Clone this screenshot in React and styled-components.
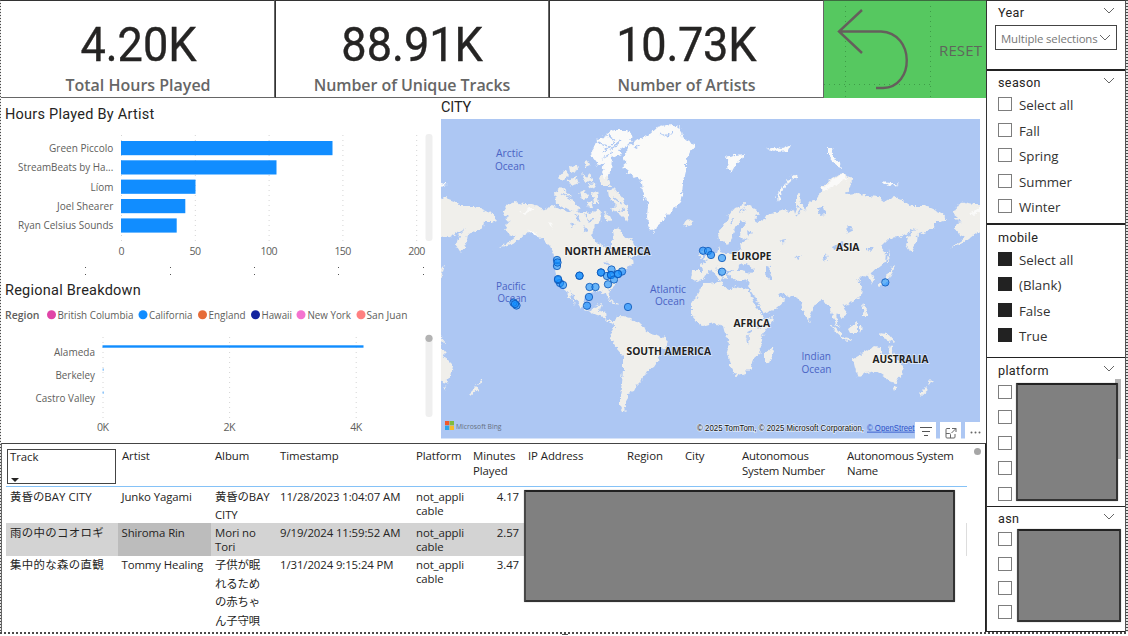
import React from "react";
import styled, { createGlobalStyle } from "styled-components";

const GlobalStyle = createGlobalStyle`
  *, *::before, *::after { box-sizing: border-box; }
  html, body { margin: 0; padding: 0; background: #fff; overflow: hidden; }
`;

const UI = `"Open Sans", "Noto Sans", "Noto Sans CJK JP", sans-serif`;
const DIN = `Roboto, "Open Sans", sans-serif`;

const Page = styled.div`
  width: 1128px;
  height: 636px;
  display: grid;
  grid-template-columns: 1px 985px 140px 2px;
  grid-template-rows: 632px 2px 2px;
  background: #fff;
  color: #252423;
  font-family: ${UI};
  overflow: hidden;
`;

const DashEdge = styled.div`
  background: ${(p) =>
    p.$flat
      ? "repeating-linear-gradient(90deg, #4a4a4a 0 2px, #fff 2px 4px)"
      : "repeating-linear-gradient(180deg, #4a4a4a 0 1px, #e4e4e4 1px 3px)"};
  ${(p) => p.$flat && "grid-column: 1 / -1;"}
`;

const Handle = styled.div`
  grid-column: 1 / -1;
  width: 6px;
  height: 1px;
  margin-left: 562px;
  background: #555;
`;

const Main = styled.main`
  display: flex;
  flex-direction: column;
`;

const KpiRow = styled.div`
  display: grid;
  grid-template-columns: 274px 274px 275px 162px;
  height: 98px;
`;

const KpiCard = styled.section`
  display: flex;
  flex-direction: column;
  align-items: center;
  border: 1px solid #333;
  border-left-width: ${(p) => (p.$first ? 0 : 1)}px;
  border-bottom-color: #666;
  border-right-color: #666;
  padding: 19px 0 0 ${(p) => (p.$first ? 1 : 0)}px;
`;

const KpiValue = styled.div`
  font: 400 48.5px/50px ${DIN};
  letter-spacing: ${(p) => p.$track || 0}px;
  transform: scaleX(0.93);
  -webkit-text-stroke: 0.4px #252423;
  white-space: nowrap;
`;

const KpiLabel = styled.div`
  margin-top: 4px;
  font: 600 16px/22px ${UI};
  letter-spacing: ${(p) => p.$track || 0}px;
  color: #666;
  white-space: nowrap;
`;

const ResetButton = styled.div`
  display: flex;
  align-items: center;
  justify-content: space-between;
  background: #56c860;
  border-top: 1px solid #3c6b3f;
  padding-right: 4px;
  font: 400 15px/20px ${UI};
  color: #5f665c;
`;

const ResetText = styled.span`
  letter-spacing: 0.1px;
  padding-top: 1px;
`;

const Middle = styled.div`
  display: grid;
  grid-template-columns: 440px 545px;
  height: 345px;
`;

const Charts = styled.div`
  display: flex;
  flex-direction: column;
`;

const Title = styled.h2`
  margin: 0;
  padding: ${(p) => p.$pad || "7px 0 0 4px"};
  height: ${(p) => p.$h || 26}px;
  font: 400 14.5px/20px ${DIN};
  letter-spacing: ${(p) => p.$track ?? 0.25}px;
  white-space: nowrap;
`;

const ChartSvg = styled.svg`
  display: block;
  font-family: ${UI};
  font-size: 10.6px;
  fill: #605e5c;
`;

const MapPanel = styled.section`
  display: flex;
  flex-direction: column;
`;

const MapFrame = styled.div`
  position: relative;
  width: 545px;
  height: 320px;
`;

const MapSvg = styled.svg`
  display: block;
`;

const MapTools = styled.div`
  position: absolute;
  right: 0;
  bottom: 0;
  display: flex;
  gap: 4px;
`;

const ToolButton = styled.div`
  width: ${(p) => p.$w || 21}px;
  height: 17px;
  padding-top: ${(p) => p.$drop || 0}px;
  background: #fff;
  display: flex;
  align-items: center;
  justify-content: center;
`;

const COLS = "112px 93px 65px 136px 57px 55px 99px 58px 57px 105px 124px";

const TablePanel = styled.section`
  position: relative;
  height: 189px;
  border-top: 1px solid #444;
  border-right: 1px solid #222;
  border-left: 1px solid #666;
  padding: 4px 0 0 4px;
  font: 400 11.4px/14.7px ${UI};
`;

const HeadRow = styled.div`
  display: grid;
  grid-template-columns: ${COLS};
  width: 961px;
  height: 39px;
  margin-bottom: 1px;
  border-bottom: 1.5px solid #85c2f7;
`;

const HeadCell = styled.div`
  padding: 1px 0 0 4px;
  letter-spacing: ${(p) => p.$track ?? -0.08}px;
  white-space: pre-line;
  ${(p) =>
    p.$focus &&
    `
    width: 109px;
    height: 35px;
    margin-left: 1px;
    padding: 0 0 0 2px;
    border: 1.5px solid #444;
    margin-top: 1px;
    line-height: 13px;
  `}
`;

const SortMark = styled.span`
  display: block;
  width: 0;
  margin: 15px 0 0 1px;
  border: 4px solid transparent;
  border-top-color: #252423;
  border-bottom: 0;
`;

const Row = styled.div`
  display: grid;
  grid-template-columns: ${COLS};
  width: 961px;
  height: ${(p) => p.$h}px;
  background: ${(p) =>
    p.$active ? "linear-gradient(90deg, #d3d3d3 949px, #fff 949px 960px, #ddd 960px)" : "#fff"};
`;

const Cell = styled.div`
  padding: ${(p) => p.$top ?? 1.5}px ${(p) => (p.$num ? 5 : 0)}px 0 ${(p) => (p.$inset ?? 4)}px;
  letter-spacing: ${(p) => p.$track ?? -0.1}px;
  text-align: ${(p) => (p.$num ? "right" : "left")};
  white-space: pre;
  line-height: ${(p) => p.$lh || 14.7}px;
  background: ${(p) => (p.$picked ? "#bcbcbc" : "none")};
`;

const ScrollDot = styled.span`
  position: absolute;
  right: 4px;
  top: 4px;
  width: 7px;
  height: 7px;
  border-radius: 50%;
  background: #a6a6a6;
`;

const Redaction = styled.div`
  position: absolute;
  left: ${(p) => p.$x}px;
  top: ${(p) => p.$y}px;
  width: ${(p) => p.$w}px;
  height: ${(p) => p.$h}px;
  background: #808080;
  border: 2px solid #333;
  border-top-color: #222;
  border-left-color: #484848;
  border-radius: 1px;
  box-shadow: 0 0 1px 0 #555;
`;

const Sidebar = styled.aside`
  display: flex;
  flex-direction: column;
  border-left: 1px solid #333;
  border-right: 1px solid #555;
  border-top: 1px solid #333;
`;

const Slicer = styled.section`
  position: relative;
  height: ${(p) => p.$h}px;
  padding: 0 10px 0 11px;
  border-bottom: ${(p) => p.$line || 1}px solid #222;
`;

const SlicerHead = styled.header`
  display: flex;
  justify-content: space-between;
  align-items: flex-start;
  height: ${(p) => p.$h || 26}px;
  padding-top: ${(p) => p.$top ?? 4}px;
  font: 400 12.6px/16px ${DIN};
  letter-spacing: 0.35px;
`;

const Select = styled.div`
  display: flex;
  justify-content: space-between;
  align-items: center;
  width: 122px;
  height: 25px;
  margin-left: -3px;
  padding: 2px 5px 0 5px;
  border: 1px solid #444;
  font: 400 11.4px/16px ${UI};
  letter-spacing: -0.13px;
  color: #777;
  white-space: nowrap;
`;

const Option = styled.label`
  display: flex;
  align-items: center;
  height: ${(p) => p.$h || 25.5}px;
  gap: 7px;
  font: 400 13.3px/18px ${UI};
  letter-spacing: 0;
  color: #333;
`;

const OptionText = styled.span`
  padding-bottom: 1.5px;
`;

const Box = styled.span`
  width: 14px;
  height: 14px;
  margin-top: -3px;
  border: 1px solid ${(p) => (p.$on ? "#222" : "#7d7d7d")};
  background: ${(p) => (p.$on ? "#222" : "#fff")};
`;

const ScrollThumb = styled.span`
  position: absolute;
  right: 4px;
  top: 21px;
  width: 6px;
  height: 80px;
  background: #b5b5b5;
`;

const Chevron = ({ top = 2 }) => (
  <svg width="12" height="8" viewBox="0 0 12 8" style={{ marginTop: top, flex: "none" }}>
    <path d="M1 1 L6 6 L11 1" fill="none" stroke="#666" strokeWidth="1" />
  </svg>
);

const ARTISTS = [
  ["Green Piccolo", 49, 141, 332.5],
  ["StreamBeats by Ha...", 18, 160.3, 276.5],
  ["Líom", 90.5, 179.6, 195.5],
  ["Joel Shearer", 57, 199, 185.3],
  ["Ryan Celsius Sounds", 18, 218.4, 176.7],
];

const ArtistChart = () => (
  <ChartSvg width="440" height="155" viewBox="1 124 440 155">
    {[0, 50, 100, 150, 200].map((v, i) => {
      const x = 121.5 + i * 73.8;
      return (
        <g key={v}>
          <line x1={x} x2={x} y1="135" y2="241" stroke="#d4d4d4" strokeDasharray="1 4" />
          <text x={x} y="254.5" textAnchor="middle" textLength={v === 0 ? 6 : v < 100 ? 11.5 : 17}>{v}</text>
        </g>
      );
    })}
    {ARTISTS.map(([name, x, y, end]) => (
      <g key={name}>
        <rect x="121" y={y} width={end - 121} height="14.2" fill="#118dff" />
        <text x={x} y={y + 11} textLength={113.3 - x} lengthAdjust="spacingAndGlyphs">{name}</text>
      </g>
    ))}
    <rect x="425.5" y="134" width="7" height="107" rx="3" fill="#efefef" />
    {[85, 170, 254, 338, 423].map((x) => (
      <g key={x} fill="#555">
        <rect x={x} y="267" width="1" height="1" />
        <rect x={x} y="274" width="1" height="1" />
      </g>
    ))}
  </ChartSvg>
);

const LEGEND = [
  ["British Columbia", "#e044a7", 51.5, 57.5, 133.5],
  ["California", "#118dff", 143, 149, 192.5],
  ["England", "#e66c37", 202.5, 208.5, 245.5],
  ["Hawaii", "#12239e", 255.5, 261.5, 292],
  ["New York", "#f472d0", 301, 307.5, 351],
  ["San Juan", "#ff8080", 361, 366.5, 407.5],
];

const RegionChart = () => (
  <ChartSvg width="440" height="142" viewBox="1 301 440 142">
    <text x="5" y="318.5" textLength="34.5" lengthAdjust="spacingAndGlyphs" fontWeight="600">Region</text>
    {LEGEND.map(([name, color, cx, x, end]) => (
      <g key={name}>
        <circle cx={cx} cy="314.8" r="4.5" fill={color} />
        <text x={x} y="318.5" textLength={end - x} lengthAdjust="spacingAndGlyphs">{name}</text>
      </g>
    ))}
    {["0K", "2K", "4K"].map((v, i) => (
      <g key={v}>
        <line x1={103 + i * 126.6} x2={103 + i * 126.6} y1="337" y2="418" stroke="#d4d4d4" strokeDasharray="1 4" />
        <text x={103 + i * 126.6} y="431" textAnchor="middle" textLength="12">{v}</text>
      </g>
    ))}
    {[["Alameda", 54, 356.2], ["Berkeley", 55.5, 379.2], ["Castro Valley", 35.5, 402.3]].map(([n, x, y]) => (
      <text key={n} x={x} y={y} textLength={95 - x} lengthAdjust="spacingAndGlyphs">{n}</text>
    ))}
    <rect x="102.5" y="345.3" width="261" height="2.4" fill="#118dff" />
    <rect x="102.5" y="368.5" width="1.5" height="2.2" fill="#8fc7fb" />
    <rect x="102.5" y="391.5" width="1.5" height="2.2" fill="#8fc7fb" />
    <rect x="425.5" y="336" width="7" height="81" rx="3" fill="#efefef" />
    <circle cx="429" cy="338.3" r="3.6" fill="#b3b3b3" />
  </ChartSvg>
);

const Land = () => (
  <g id="land">
    <g fill="#f0efeb" stroke="none">
      <path d="M503 213L508 205L514 202L524 204L532 204L541 207L543 211L548 208L553 206L562 210L568 212L575 209L580 214L586 211L591 214L598 209L602 214L601 221L596 224L593 229L592 238L597 242L604 246L608 251L611 248L611 242L614 238L613 231L617 229L622 234L626 239L631 238L634 246L640 251L637 256L629 258L634 262L628 268L622 272L618 277L617 283L612 288L608 291L610 298L607 299L604 292L597 291L590 293L585 296L583 304L586 310L592 311L595 306L601 304L599 311L606 313L607 319L613 322L618 321L617 324L610 323L604 317L596 315L587 311L581 307L576 299L570 291L572 299L576 305L570 299L566 290L560 286L556 277L555 269L557 261L553 253L550 246L544 240L537 235L528 232L525 234L520 238L513 243L499 248L511 241L516 237L509 234L505 229L507 223L512 222L504 219L508 217Z" />
      <path d="M613 321L617 317L622 316L631 318L636 322L643 325L646 332L657 335L667 339L666 345L660 351L658 361L654 367L647 371L642 380L637 385L634 391L628 393L628 398L625 403L624 408L628 412L623 411L620 405L620 395L622 383L623 369L623 356L617 349L613 342L610 336L612 331L614 327Z" />
      <path d="M718 233L724 226L729 215L736 207L744 204L750 206L757 210L760 214L754 216L758 222L764 220L767 215L776 213L784 210L792 211L796 205L796 195L800 193L801 204L806 211L808 204L813 201L820 196L822 186L829 181L838 175L845 174L852 179L851 188L846 194L858 193L868 196L878 197L885 202L893 197L904 201L911 206L923 206L931 208L940 212L947 220L941 222L934 222L933 228L924 232L918 234L917 242L911 253L906 245L909 235L916 228L909 232L900 237L889 238L881 246L886 252L885 263L877 269L871 272L874 281L871 284L868 276L863 275L858 280L862 287L861 295L855 301L848 304L842 306L848 314L842 319L837 313L836 320L841 328L838 327L833 318L830 309L825 302L820 299L814 307L810 315L808 320L804 314L801 302L797 298L785 295L779 293L785 301L776 309L764 314L758 303L752 292L748 286L749 279L739 281L732 278L729 274L732 270L726 269L728 280L724 279L720 272L715 267L722 277L720 281L712 270L707 273L702 280L697 282L692 279L693 271L702 271L701 265L708 261L713 256L717 253L719 247L721 252L727 254L736 253L741 249L740 243L748 240L740 237L741 229L746 223L741 219L735 227L732 238L728 246L723 241L719 241Z" />
      <path d="M703 284L710 284L722 281L723 286L730 290L736 286L748 289L754 301L759 312L765 319L773 317L771 324L763 335L760 342L761 352L753 359L751 368L745 374L736 377L731 368L727 354L730 345L725 334L723 326L714 323L703 326L697 322L691 315L691 305L696 297Z" />
      <path d="M773 347L774 351L769 363L765 362L765 354Z" />
      <path d="M853 359L860 355L867 351L873 346L881 347L881 353L888 356L890 345L894 352L896 359L903 366L901 376L896 383L888 381L884 376L876 371L867 373L857 377L855 368Z" />
      <path d="M892 386L897 387L894 391Z M919 394L927 386L929 389L921 396Z M928 385L930 379L933 382Z" />
      <path d="M879 333L888 334L896 343L889 340L883 338Z M848 329L857 322L857 333L850 333Z M830 324L843 334L841 337L834 331Z M843 337L853 339L852 341L843 339Z M859 326L863 325L861 334Z M862 303L865 305L868 316L864 316Z" />
      <path d="M878 284L885 279L889 273L892 266L895 264L892 274L888 282L880 286Z M888 250L890 262L887 262Z" />
      <path d="M703 260L705 256L702 251L706 247L709 255L712 259L704 262Z M697 256L701 252L701 258Z" />
      <path d="M683 223L688 219L694 221L692 225L686 227Z M808 319L811 323L808 322Z" />
      <path d="M555 192L561 187L570 195L575 204L581 208L575 211L565 208L556 203Z M599 178L606 172L611 186L602 186Z M608 190L615 189L624 200L630 215L627 221L620 214L612 209L616 205L609 199Z M613 230L619 228L623 234L618 241Z M608 299L614 301L622 305L614 304Z" />
      <path d="M558 178L565 170L569 175L564 180Z M570 167L577 164L578 169L571 173Z M567 180L577 177L579 184L571 186Z M581 173L587 178L590 173L592 180L585 184Z M592 193L597 191L599 204L594 204Z M580 192L585 190L588 197L582 199Z M584 163L588 160L590 166L585 168Z M589 184L595 183L596 188L590 189Z M588 203L592 201L594 207L589 208Z M604 212L609 215L612 221L605 220Z" />
    </g>
    <g fill="#fafaf9">
      <path d="M622 167L627 163L623 158L628 148L634 141L642 138L650 133L657 127L670 124L680 128L682 137L687 141L696 144L690 151L686 160L686 172L683 184L682 195L679 204L672 211L663 220L656 226L654 232L649 228L647 217L648 206L643 193L642 182L635 177L628 172Z" />
      <path d="M591 151L598 140L606 136L613 130L626 130L633 136L629 145L619 149L622 154L612 158L611 170L604 179L601 172L606 163L598 166L592 158Z" />
      <path d="M725 157L735 155L744 154L741 160L736 164L731 173L727 168L729 163Z M828 148L832 148L834 158L840 163L842 168L837 167L832 160L828 155Z" />
      <path d="M767 149L774 147L782 149L791 145L788 151L778 152Z M882 182L890 183L899 185L888 186Z M838 176L844 174L848 179L824 191L822 188Z" />
      <path d="M521 213L529 208L534 208L524 215Z M548 222L553 230L551 223Z M526 230L535 232L541 238L533 234Z" />
    </g>
    <path d="M779 201Q777 188 796 176" fill="none" stroke="#f7f7f5" strokeWidth="3" strokeDasharray="6 1" />
    <g fill="none" stroke="#adc7f3" strokeWidth="1.4">
      <path d="M597 141L606 146M603 152L614 142M610 150L621 141M609 136L616 141M601 159L612 153" />
      <path d="M562 193L572 199M613 197L622 204M618 211L625 209M633 148L640 146M660 133L667 137L673 131M574 213L579 219M586 214L589 221L595 219" />
      <path d="M734 217L731 225M739 212L746 209M802 209L797 216M748 333L748 341M755 326L759 328" />
    </g>
    <g fill="#adc7f3">
      <path d="M737 271L739 266L744 264L749 265L755 270L751 273L742 271Z M765 265L770 266L769 272L773 279L769 281L765 274Z" />
      <path d="M576 217L581 220L578 222Z M569 223L575 225L571 227Z M584 226L588 231L585 232Z M817 208L824 207L826 214L819 215Z M846 229L850 225L852 231L848 233Z M833 247L842 242L843 246L834 250Z M781 240L785 239L784 244Z M794 257L802 256L798 259Z M823 259L826 254L827 261Z M866 248L874 248L870 251Z M748 331L752 330L751 335Z M746 336L749 345L747 344Z M602 262L609 263L607 266Z M608 267L612 271L609 270Z M747 230L751 233L748 236Z M793 206L795 214L798 206Z" />
    </g>
  </g>
);

const PINS = [
  [557, 266], [557, 260], [557.5, 262.5], [560, 283], [563, 285], [558, 280], [558, 279], [579.5, 275.7], [579.5, 275.7],
  [601, 272.5], [601, 272.5], [607, 276], [611.5, 269.5], [611, 275], [611, 275], [614, 279.5], [622, 271.5], [618, 274], [618, 274],
  [608, 284.3], [589.5, 287], [595.5, 287], [589, 297], [587, 305.7], [628, 307], [516.5, 305.5], [513.5, 302.7], [515, 304],
  [703, 250.7], [708, 251], [711, 255], [722, 258], [722, 271.7], [885.3, 282.4],
];

const CONTINENTS = [
  ["NORTH AMERICA", 564.5, 254.8, 86], ["SOUTH AMERICA", 626.5, 355, 84.5], ["EUROPE", 731.5, 260, 40],
  ["ASIA", 836, 251, 23.5], ["AFRICA", 733.5, 326.7, 36.5], ["AUSTRALIA", 872.5, 363, 56],
];

const OCEANS = [
  ["Arctic", 496, 157, 27], ["Ocean", 495, 169.5, 30], ["Pacific", 496, 290, 29.5], ["Ocean", 497.5, 302.3, 29],
  ["Atlantic", 650, 292.7, 36], ["Ocean", 655, 305, 30], ["Indian", 801.5, 360.3, 29.5], ["Ocean", 801.5, 372.6, 30],
];

const WorldMap = () => (
  <MapSvg width="545" height="320" viewBox="441 119 545 320" fontFamily="Open Sans, Noto Sans, sans-serif">
    <defs>
      <clipPath id="frame"><rect x="441" y="119" width="539" height="319.5" /></clipPath>
      <filter id="coast" x="0" y="0" width="1" height="1">
        <feTurbulence type="fractalNoise" baseFrequency="0.22" numOctaves="3" seed="4" />
        <feDisplacementMap in="SourceGraphic" scale="6" xChannelSelector="R" yChannelSelector="G" />
      </filter>
    </defs>
    <g clipPath="url(#frame)">
      <g filter="url(#coast)">
        <rect x="431" y="109" width="560" height="340" fill="#adc7f3" />
        <Land />
        <use href="#land" x="-450" />
        <use href="#land" x="450" />
      </g>
      {OCEANS.map(([t, x, y, w], i) => (
        <text key={i} x={x} y={y} textLength={w} lengthAdjust="spacingAndGlyphs" fontSize="10.5" fill="#4a63c4">{t}</text>
      ))}
      {PINS.map(([x, y], i) => (
        <circle key={i} cx={x} cy={y} r="3.7" fill="#118dff" fillOpacity="0.6" stroke="#0b55b5" strokeOpacity="0.8" strokeWidth="1" />
      ))}
      {CONTINENTS.map(([t, x, y, w]) => (
        <text key={t} x={x} y={y} textLength={w} lengthAdjust="spacingAndGlyphs" fontSize="10.8" fontWeight="700" fill="#222"
          stroke="#fff" strokeOpacity="0.6" strokeWidth="1.5" paintOrder="stroke">{t}</text>
      ))}
      <rect x="445" y="421" width="4.3" height="4.3" fill="#f0592b" />
      <rect x="449.7" y="421" width="4.3" height="4.3" fill="#80bb3f" />
      <rect x="445" y="425.7" width="4.3" height="4.3" fill="#2aa5ea" />
      <rect x="449.7" y="425.7" width="4.3" height="4.3" fill="#f7bb2c" />
      <text x="456" y="428.6" textLength="45.5" lengthAdjust="spacingAndGlyphs" fontSize="8" fill="#66707f">Microsoft Bing</text>
      <g fontFamily="Liberation Sans, sans-serif" fontSize="8.6">
        <text x="697" y="430.7" textLength="167" lengthAdjust="spacingAndGlyphs" fill="#111" stroke="#fff" strokeOpacity="0.6" strokeWidth="1.5" paintOrder="stroke">{"© 2025 TomTom, © 2025 Microsoft Corporation,"}</text>
        <text x="867" y="430.7" textLength="47.5" lengthAdjust="spacingAndGlyphs" fill="#2b50c8" textDecoration="underline">© OpenStreet</text>
      </g>
    </g>
  </MapSvg>
);

const CardData = [
  ["4.20K", "Total Hours Played", 0, 0],
  ["88.91K", "Number of Unique Tracks", 0, -0.06],
  ["10.73K", "Number of Artists", -0.3, 0],
];

const HEADERS = [
  "Artist", "Album", "Timestamp", "Platform", "Minutes\nPlayed", "IP Address", "Region", "City",
  "Autonomous\nSystem Number", "Autonomous System\nName",
];

const ROWS = [
  { h: 35, track: "黄昏のBAY CITY", artist: "Junko Yagami", album: "黄昏のBAY\nCITY", time: "11/28/2023 1:04:07 AM", min: "4.17", lh: 17.6, ls: 0.05 },
  { h: 33, track: "雨の中のコオロギ", artist: "Shiroma Rin", album: "Mori no\nTori", time: "9/19/2024 11:59:52 AM", min: "2.57", active: true, ls: 0.35 },
  { h: 75, track: "集中的な森の直観", artist: "Tommy Healing", album: "子供が眠\nれるため\nの赤ちゃ\nん子守唄", time: "1/31/2024 9:15:24 PM", min: "3.47", lh: 18.6, ls: 0.35 },
];

const Options = ({ items, on, h }) =>
  items.map((label, i) => (
    <Option key={i} $h={h}>
      <Box $on={on} />
      <OptionText>{label}</OptionText>
    </Option>
  ));

export default function App() {
  return (
    <>
      <GlobalStyle />
      <Page>
        <DashEdge />
        <Main>
          <KpiRow>
            {CardData.map(([value, label, t1, t2], i) => (
              <KpiCard key={label} $first={i === 0}>
                <KpiValue $track={t1}>{value}</KpiValue>
                <KpiLabel $track={t2}>{label}</KpiLabel>
              </KpiCard>
            ))}
            <ResetButton>
              <svg width="110" height="97" viewBox="824 1 110 97" fill="none">
                <path d="M845.5 6V98M930.5 6V98M824 84.5H934" stroke="#3f9c48" strokeDasharray="1 4" />
                <path d="M862 10L839 31.5L862 53M839 31.5H881C915 33 915 87 883 88H876" stroke="#655f5c" strokeWidth="2.4" />
              </svg>
              <ResetText>RESET</ResetText>
            </ResetButton>
          </KpiRow>
          <Middle>
            <Charts>
              <Title>Hours Played By Artist</Title>
              <ArtistChart />
              <Title $h={22} $pad="2px 0 0 4px">Regional Breakdown</Title>
              <RegionChart />
            </Charts>
            <MapPanel>
              <Title $h={21} $pad="0" $track={-0.15}>CITY</Title>
              <MapFrame>
                <WorldMap />
                <MapTools>
                  <ToolButton>
                    <svg width="12" height="10" viewBox="0 0 12 10" stroke="#555" strokeWidth="1"><path d="M0 1.5H12M2 5.5H10M4 9.5H8" /></svg>
                  </ToolButton>
                  <ToolButton $drop={4}>
                    <svg width="12" height="12" viewBox="0 0 12 12" fill="none" stroke="#666"><path d="M5 1.5H2Q1 1.5 1 2.5V10Q1 11 2 11H9Q10 11 10 10V7M7 1.5H11V5M11 1.5L6.5 6M1 6.5H4.5Q5.5 6.5 5.5 7.5V11" /></svg>
                  </ToolButton>
                  <ToolButton $w={21} $drop={4}>
                    <svg width="11" height="3" viewBox="0 0 11 3" fill="#666"><circle cx="1.5" cy="1.5" r="1" /><circle cx="5.5" cy="1.5" r="1" /><circle cx="9.5" cy="1.5" r="1" /></svg>
                  </ToolButton>
                </MapTools>
              </MapFrame>
            </MapPanel>
          </Middle>
          <TablePanel>
            <HeadRow>
              <HeadCell $focus>Track<SortMark /></HeadCell>
              {HEADERS.map((h) => (
                <HeadCell key={h} $track={h.startsWith("Auto") ? -0.2 : undefined}>{h}</HeadCell>
              ))}
            </HeadRow>
            {ROWS.map((r) => (
              <Row key={r.track} $h={r.h} $active={r.active}>
                <Cell $track={r.ls} $top={r.active ? 2.5 : 1.5}>{r.track}</Cell>
                <Cell $picked={r.active} $inset={3.5} $top={r.active ? 2.5 : 1.5}>{r.artist}</Cell>
                <Cell $lh={r.lh} $top={r.lh ? 0 : 2.5}>{r.album}</Cell>
                <Cell $top={r.active ? 2.5 : 1.5}>{r.time}</Cell>
                <Cell $top={r.active ? 2.5 : 1.5}>{"not_appli\ncable"}</Cell>
                <Cell $num $top={r.active ? 2.5 : 1.5}>{r.min}</Cell>
              </Row>
            ))}
            <ScrollDot />
            <Redaction $x={522} $y={46} $w={431} $h={112} />
          </TablePanel>
        </Main>
        <Sidebar>
          <Slicer $h={70} $line={2}>
            <SlicerHead $h={24} $top={3.5}>Year<Chevron /></SlicerHead>
            <Select>Multiple selections<Chevron top={-2} /></Select>
          </Slicer>
          <Slicer $h={154} $line={2}>
            <SlicerHead $h={22}>season<Chevron /></SlicerHead>
            <Options items={["Select all", "Fall", "Spring", "Summer", "Winter"]} />
          </Slicer>
          <Slicer $h={133}>
            <SlicerHead $h={22.6} $top={5}>mobile</SlicerHead>
            <Options on items={["Select all", "(Blank)", "False", "True"]} />
          </Slicer>
          <Slicer $h={149}>
            <SlicerHead $h={22.4} $top={5}>platform<Chevron /></SlicerHead>
            <Options items={["", "", "", "", ""]} />
            <ScrollThumb />
            <Redaction $x={29} $y={25} $w={102} $h={118} />
          </Slicer>
          <Slicer $h={125}>
            <SlicerHead $h={21.5} $top={4}>asn<Chevron /></SlicerHead>
            <Options h={24.4} items={["", "", "", ""]} />
            <Redaction $x={30} $y={22} $w={104} $h={93} />
          </Slicer>
        </Sidebar>
        <DashEdge />
        <DashEdge $flat />
        <Handle />
      </Page>
    </>
  );
}
